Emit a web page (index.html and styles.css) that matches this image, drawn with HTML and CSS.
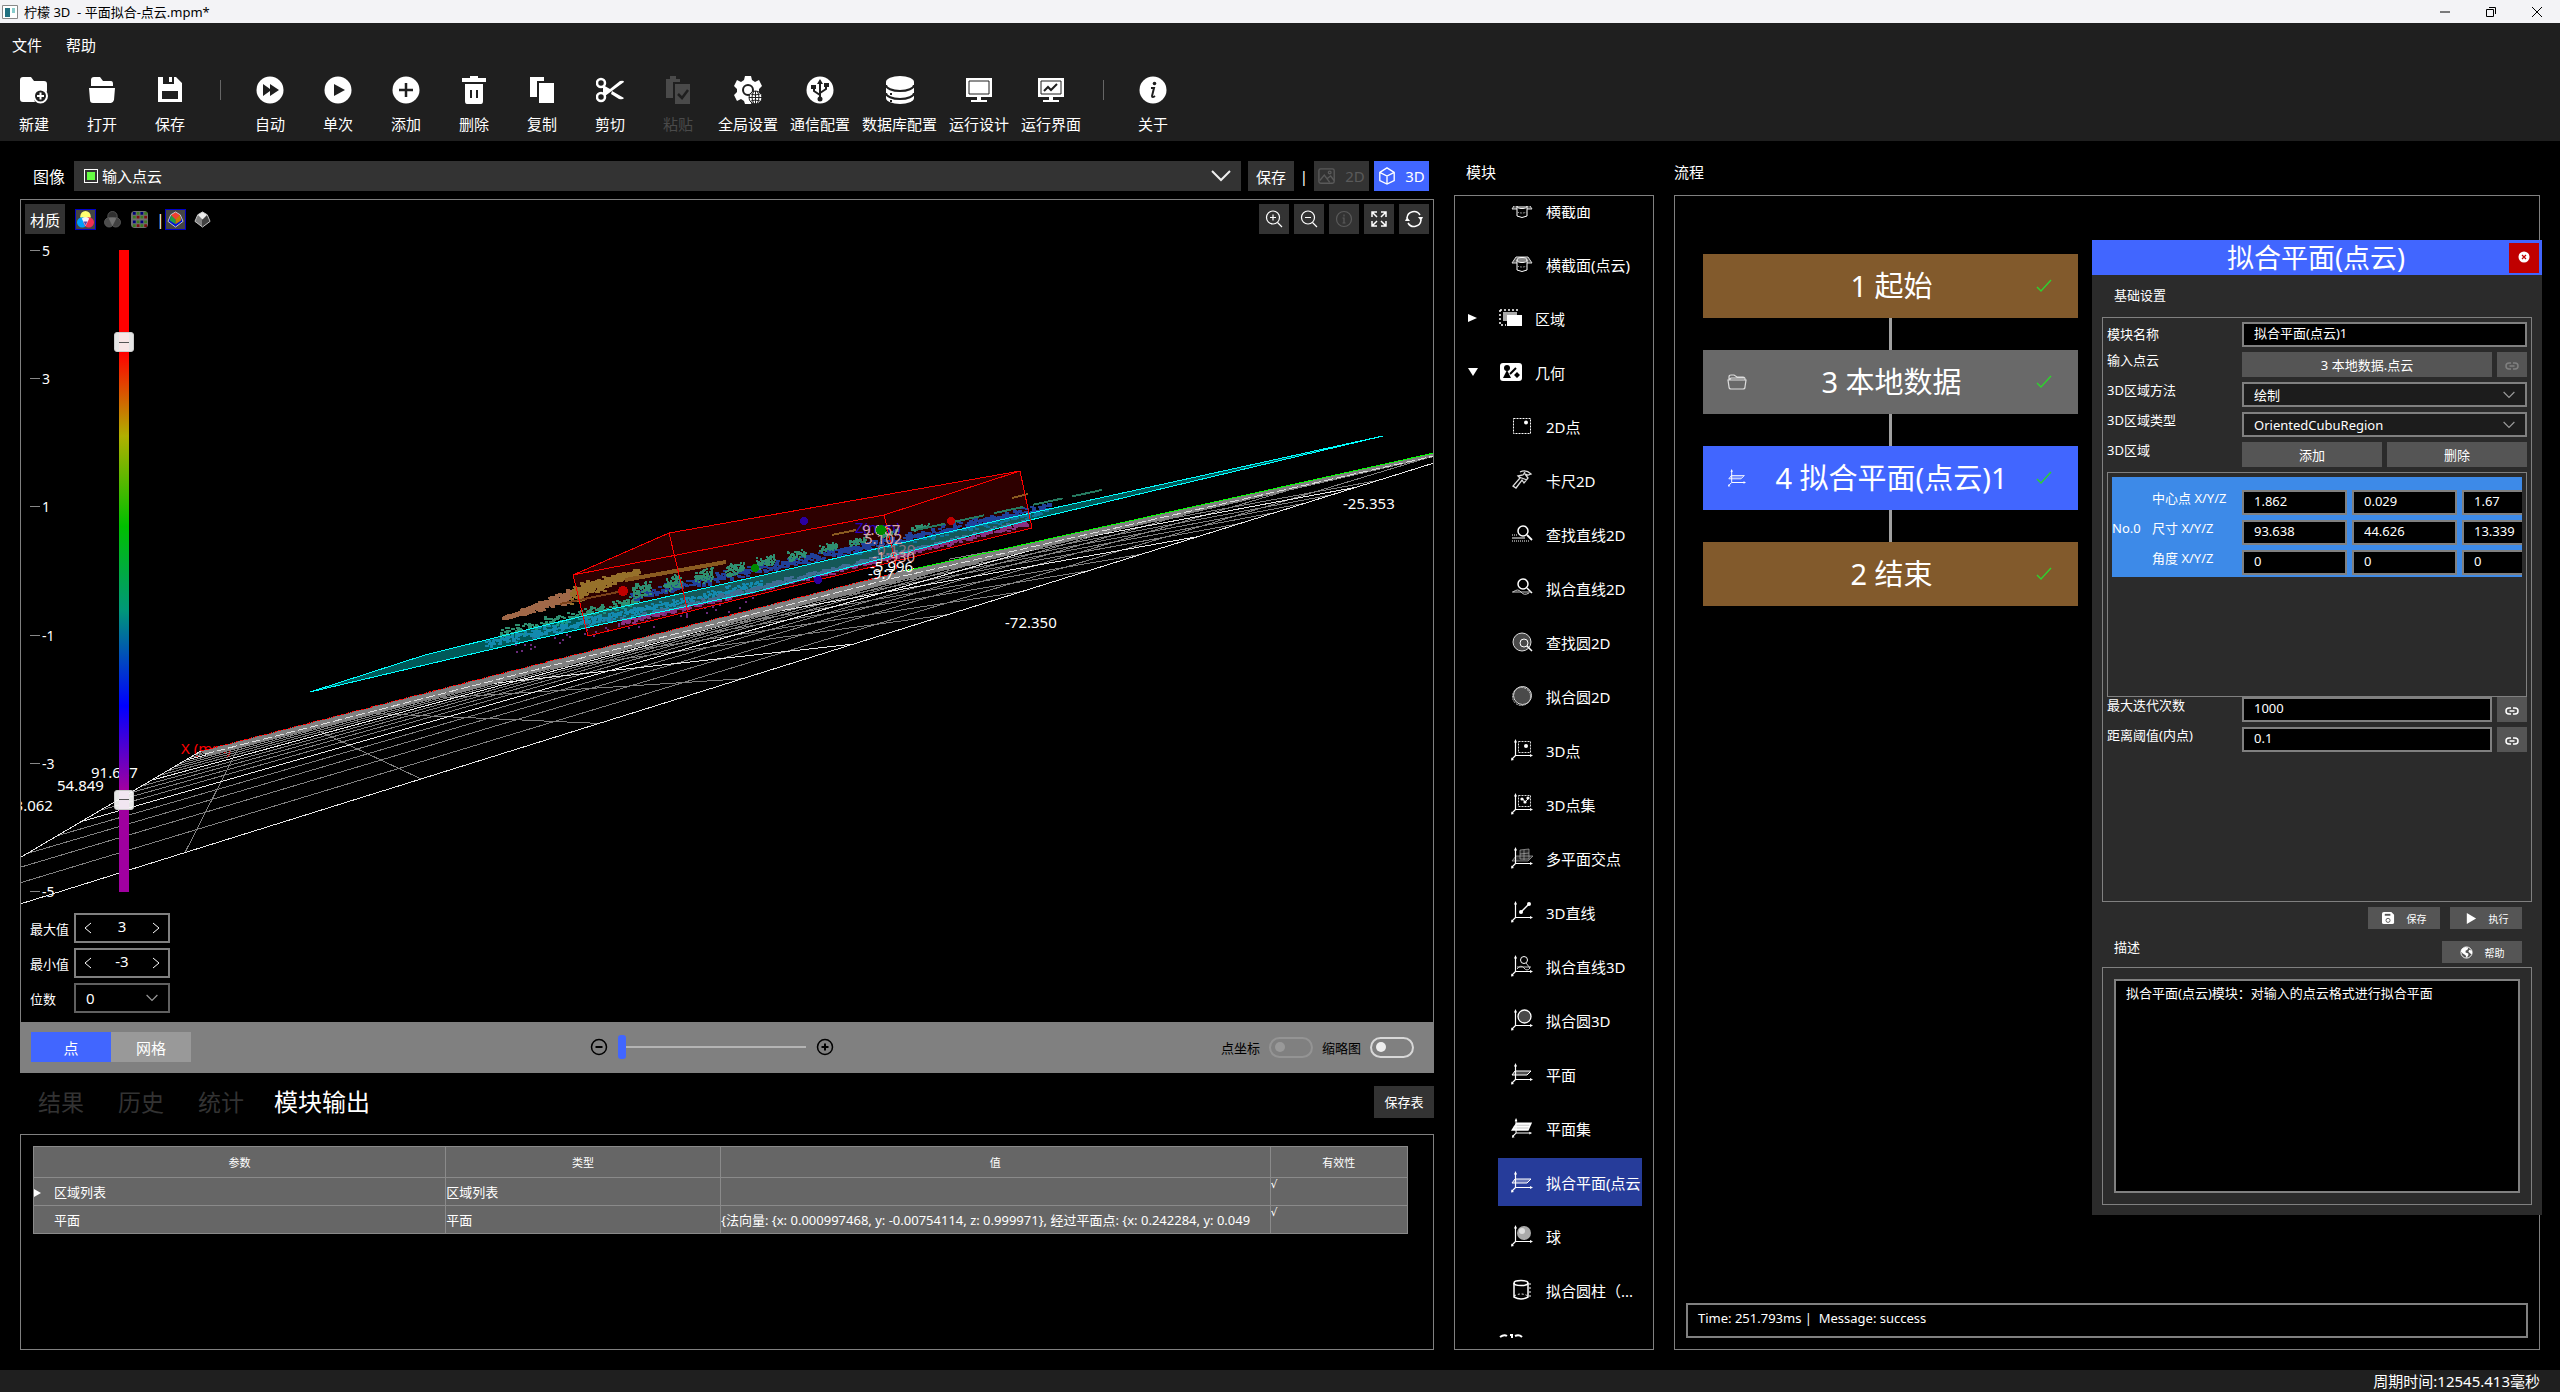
FILE: index.html
```html
<!DOCTYPE html>
<html lang="zh-CN">
<head>
    <meta charset="UTF-8">
    <meta name="viewport" content="width=device-width, initial-scale=1.0">
    <title>柠檬 3D - 平面拟合-点云.mpm*</title>
    <link rel="stylesheet" href="styles.css">
</head>
<body>
    <!-- 图标 -->
    <svg class="sprite" aria-hidden="true">
        <symbol id="i-new" viewBox="0 0 28 28"><path fill="#fff" d="M3 1h8l3 4h10q3 0 3 3v8a8 8 0 0 0-12 10H3q-3 0-3-3V4q0-3 3-3z"/><circle cx="20.500" cy="20" r="6.500" fill="#1f1f1f" stroke="#fff" stroke-width="2"/><path d="M20.500 16.500v7M17 20h7" stroke="#fff" stroke-width="2"/></symbol>
        <symbol id="i-open" viewBox="0 0 28 28"><path fill="#fff" d="M3 10V4q0-3 3-3h6l3 4h8q2 0 2 3v2zM1 12h26l-1 12q-1 3-3 3H5q-3 0-3-3z"/></symbol>
        <symbol id="i-save" viewBox="0 0 28 28"><path fill="#fff" fill-rule="evenodd" d="M2 1h18l6 6v19H2zM7 1v7h11V1h-2v5h-3V1zM6 15v8h16v-8z"/></symbol>
        <symbol id="i-auto" viewBox="0 0 28 28"><circle cx="14" cy="14" r="13.500" fill="#fff"/><path fill="#1f1f1f" d="M7 8l7 5V8l9 6-9 6v-5l-7 5z"/></symbol>
        <symbol id="i-once" viewBox="0 0 28 28"><circle cx="14" cy="14" r="13.500" fill="#fff"/><path fill="#1f1f1f" d="M10 8l11 6-11 6z"/></symbol>
        <symbol id="i-add" viewBox="0 0 28 28"><circle cx="14" cy="14" r="13.500" fill="#fff"/><path stroke="#1f1f1f" stroke-width="2.500" d="M14 7v14M7 14h14"/></symbol>
        <symbol id="i-del" viewBox="0 0 28 28"><path fill="#fff" fill-rule="evenodd" d="M10 0h8v2h8v4H2V2h8zM5 8h18v17q0 3-2 3H7q-2 0-2-3zM10 14v8h2v-8zm6 0v8h2v-8z"/></symbol>
        <symbol id="i-copy" viewBox="0 0 28 28"><path fill="#fff" d="M2 1h14v4H9v16H2zM11 7h15v20H11z"/></symbol>
        <symbol id="i-cut" viewBox="0 0 28 28"><g fill="none" stroke="#fff" stroke-width="2.500"><circle cx="5" cy="7" r="4"/><circle cx="5" cy="21" r="4"/></g><path fill="#fff" d="M7 9l7 4L24 5q4-1 4 1L9 20l-2-2zM16 15l12 7q-1 2-5 1l-8-5z"/></symbol>
        <symbol id="i-paste" viewBox="0 0 28 28"><path fill="#4a4a4a" d="M2 3h4V0h6v3h4v3H9v16H2zM11 8h15v20H11z"/><path d="M14 18l4 4 6-8" fill="none" stroke="#1f1f1f" stroke-width="2.500"/></symbol>
        <symbol id="i-gear" viewBox="0 0 28 28"><path fill="#fff" d="M11 0h6l1 4 3 2 4-2 3 6-3 3v3l3 3-3 6-4-2-3 2-1 3h-6l-1-3-3-2-4 2-3-6 3-3v-3L0 10l3-6 4 2 3-2z"/><circle cx="14" cy="14" r="5" fill="none" stroke="#1f1f1f" stroke-width="2"/><circle cx="21.500" cy="21.500" r="6.500" fill="#fff" stroke="#1f1f1f"/><path d="M15 21.500h13M21.500 15v13M17 18q4 2 9 0M17 25q4-2 9 0M20 15q-4 6 0 13M23 15q4 6 0 13" fill="none" stroke="#1f1f1f"/></symbol>
        <symbol id="i-usb" viewBox="0 0 28 28"><circle cx="14" cy="14" r="13.500" fill="#fff"/><path fill="none" stroke="#1f1f1f" stroke-width="2" d="M14 5v17M14 19l-6-4v-4M14 17l6-4V9"/><path fill="#1f1f1f" d="M14 3l3 5h-6zM5 9h5v4H5zM18 7h5v4h-5z"/><circle cx="14" cy="23" r="2.500" fill="#1f1f1f"/></symbol>
        <symbol id="i-db" viewBox="0 0 28 28"><path fill="#fff" d="M0 6a14 6 0 0 1 28 0v16a14 6 0 0 1-28 0z"/><path fill="none" stroke="#1f1f1f" stroke-width="2" d="M0 9a14 6 0 0 0 28 0M0 17a14 6 0 0 0 28 0"/><path fill="#1f1f1f" d="M4 17h2v2H4zM4 24h2v2H4z"/></symbol>
        <symbol id="i-screen" viewBox="0 0 28 28"><path fill="#fff" d="M1 2h26v19H1z"/><path fill="none" stroke="#1f1f1f" d="M4 5h20v13H4z"/><path fill="#fff" d="M12 21h4v3h6v2H6v-2h6z"/></symbol>
        <symbol id="i-chart" viewBox="0 0 28 28"><path fill="#fff" d="M1 2h26v19H1zM12 21h4v3h6v2H6v-2h6z"/><path fill="none" stroke="#1f1f1f" d="M4 5h20v13H4z"/><path fill="none" stroke="#1f1f1f" stroke-width="2" d="M7 15l4-4 3 3 6-6"/></symbol>
        <symbol id="i-about" viewBox="0 0 28 28"><circle cx="14" cy="14" r="13.500" fill="#fff"/><circle cx="15.500" cy="7.500" r="1.800" fill="#1f1f1f"/><path d="M12 12h3l-2 8q0 2 3 0" fill="none" stroke="#1f1f1f" stroke-width="2"/></symbol>
        <symbol id="i-down" viewBox="0 0 20 12"><path d="M1 1l9 9 9-9" fill="none" stroke="currentColor" stroke-width="2"/></symbol>
        <symbol id="i-img" viewBox="0 0 20 18"><g fill="none" stroke="currentColor" stroke-width="1.500"><rect x="1" y="1" width="17" height="16" rx="2"/><path d="M2 14l5-6 6 8M10 12l4-3 4 5"/><circle cx="13" cy="5" r="1.500"/></g></symbol>
        <symbol id="i-cube" viewBox="0 0 20 20"><path d="M10 1l8 5v9l-8 4-8-4V6zM2 6l8 4 8-4M10 10v9" fill="none" stroke="currentColor" stroke-width="1.500"/></symbol>
        <symbol id="i-rgb" viewBox="0 0 18 18"><circle cx="9" cy="5.500" r="5.500" fill="#ffff70"/><circle cx="5.500" cy="12" r="5.500" fill="#00a0ff"/><circle cx="12.500" cy="12" r="5.500" fill="#f03050"/><path d="M5 8q4-3 8 0l-4 8z" fill="#f0f0ff"/><path d="M7 11h4l-2 4z" fill="#5040b0"/></symbol>
        <symbol id="i-mono" viewBox="0 0 18 18"><g stroke="#606060" stroke-width=".8"><circle cx="9" cy="5.500" r="5" fill="#303030"/><circle cx="5.500" cy="12" r="5" fill="#4c4c4c"/><circle cx="12.500" cy="12" r="5" fill="#404040"/></g><path d="M5 8q4-3 8 0l-4 8z" fill="#707070"/></symbol>
        <symbol id="i-tex" viewBox="0 0 18 18"><rect width="18" height="18" rx="4" fill="#707070"/><path fill="#00007a" d="M2 1h3v3H2zM10 1h3v3h-3zM2 10h3v3H2zM10 10h3v3h-3z"/><path fill="#7a1010" d="M6 5h3v3H6zM14 5h3v3h-3zM6 14h3v3H6zM14 14h3v3h-3z"/><path fill="#3c7a20" d="M6 1h3v3H6zM14 1h3v3h-3zM2 5h3v3H2zM10 5h3v3h-3zM6 10h3v3H6zM14 10h3v3h-3zM2 14h3v3H2zM10 14h3v3h-3z"/></symbol>
        <symbol id="i-gem" viewBox="0 0 18 18"><path fill="#0010d8" d="M4 4l5-3 5 3 3 7-8 6-8-6z"/><path fill="#20a040" d="M4 4l5 2v8l-6-4z"/><path fill="#c08000" d="M14 4L9 6v8l6-4z"/><path fill="#f04030" d="M4 4l5-3 5 3-5 5z"/><path fill="none" stroke="#ccc" d="M4 4l5-3 5 3 3 7-8 6-8-6z"/></symbol>
        <symbol id="i-gem2" viewBox="0 0 18 18"><path fill="#808080" d="M4 4l5-3v16l-8-6z"/><path fill="#404040" d="M14 4L9 1v16l8-6z"/><path fill="#eee" d="M4 4l5-3 5 3-5 5z"/><path fill="none" stroke="#ccc" d="M4 4l5-3 5 3 3 7-8 6-8-6z"/></symbol>
        <symbol id="i-zin" viewBox="0 0 18 18"><g fill="none" stroke="currentColor" stroke-width="1.200"><circle cx="8" cy="7.500" r="6.500"/><path d="M12.500 12.500L17 17M5 7.500h6M8 4.500v6"/></g></symbol>
        <symbol id="i-zout" viewBox="0 0 18 18"><g fill="none" stroke="currentColor" stroke-width="1.200"><circle cx="8" cy="7.500" r="6.500"/><path d="M12.500 12.500L17 17M5 7.500h6"/></g></symbol>
        <symbol id="i-inf" viewBox="0 0 18 18"><g fill="none" stroke="currentColor" stroke-width="1.200"><circle cx="9" cy="9" r="7.500"/><path d="M7.500 8H9v5M7.500 13h3M9 4.500v2"/></g></symbol>
        <symbol id="i-full" viewBox="0 0 18 18"><path d="M2 7V2h5M11 2h5v5M16 11v5h-5M7 16H2v-5M2 2l5 5M16 2l-5 5M16 16l-5-5M2 16l5-5" fill="none" stroke="currentColor" stroke-width="1.500"/></symbol>
        <symbol id="i-sync" viewBox="0 0 18 18"><path d="M2 8a7 7 0 0 1 13-3M16 10a7 7 0 0 1-13 3" fill="none" stroke="currentColor" stroke-width="1.500"/><path fill="currentColor" d="M13 7h5l-2 4zM0 11h5L2 7z"/></symbol>
        <symbol id="i-minus" viewBox="0 0 18 18"><circle cx="9" cy="9" r="7.500" fill="none" stroke="#000" stroke-width="1.500"/><path d="M5.500 9h7" stroke="#000" stroke-width="2"/></symbol>
        <symbol id="i-plus" viewBox="0 0 18 18"><circle cx="9" cy="9" r="7.500" fill="none" stroke="#000" stroke-width="1.500"/><path d="M5.500 9h7M9 5.500v7" stroke="#000" stroke-width="2"/></symbol>
        <symbol id="i-tick" viewBox="0 0 16 14"><path d="M1 8l4 4L15 1" fill="none" stroke="#2fd02f" stroke-width="1.500"/></symbol>
        <symbol id="i-link" viewBox="0 0 14 8"><path d="M6 1H4a3 3 0 0 0 0 6h2M8 1h2a3 3 0 0 1 0 6H8M4.500 4h5" fill="none" stroke="currentColor" stroke-width="1.500"/></symbol>
        <symbol id="i-folder" viewBox="0 0 20 16"><path d="M2 6V3q0-2 2-2h3l3 2h6q2 0 2 2v1M1 6h18l-1 7q0 2-2 2H4q-2 0-2-2zM2 6l2-2h13" fill="none" stroke="#ddd" stroke-width="1.200"/></symbol>

        <symbol id="axes" viewBox="0 0 22 22"><path d="M4.500 2v14.500H20M4.500 16.500L1 20" fill="none" stroke="#fff" stroke-width="1.200"/><path fill="#fff" d="M4.500 0l1.500 3.500H3zM22 16.500L19 18v-3zM0 21.500l.5-3L3 21z"/></symbol>
        <symbol id="m-cross" viewBox="0 0 22 22"><path d="M5 4h12l4 6H1z" fill="#555" stroke="#ddd"/><path d="M6 7v10q5 3 10 0V7" fill="#000" stroke="#fff"/><ellipse cx="11" cy="7" rx="5" ry="2.500" fill="#888" stroke="#fff"/><path d="M6 13q5 2 10 0" fill="none" stroke="#999" stroke-dasharray="2 1"/></symbol>
        <symbol id="m-area" viewBox="0 0 24 20"><path d="M1 2h20M1 2v15h6" fill="none" stroke="#fff" stroke-width="1.500" stroke-dasharray="2 2"/><path fill="#aaa" d="M4 4h14v9H4z"/><path fill="#fff" d="M8 7h15v11H8z"/></symbol>
        <symbol id="m-geo" viewBox="0 0 24 20"><rect x="1" y="1" width="22" height="18" rx="3" fill="#fff"/><circle cx="8" cy="6" r="3" fill="#000"/><path d="M8 8l-4 8h8zM18 10l3 3-3 3-3-3z"/><path d="M11 12l6-6" stroke="#000" stroke-width="2"/></symbol>
        <symbol id="m-pt" viewBox="0 0 22 22"><path d="M2.500 3.500h17v15h-17z" fill="none" stroke="#fff" stroke-dasharray="2 1"/><circle cx="15" cy="7.500" r="2" fill="#fff"/></symbol>
        <symbol id="m-cal" viewBox="0 0 22 22"><path d="M9 3q6-3 11 2l-3 1-3-1 3 4-4 5-2-3-6 8-3-2 7-8-2-2 5-1 2-3M8 8l8 3" fill="none" stroke="#ddd" stroke-width="1.300"/></symbol>
        <symbol id="m-fline" viewBox="0 0 22 22"><circle cx="12" cy="8" r="5" fill="none" stroke="#fff" stroke-width="1.500"/><path d="M16 12l5 5" stroke="#fff" stroke-width="1.800"/><path d="M1 15h13" stroke="#fff"/><path d="M1 12h6M1 18h17" stroke="#fff" stroke-dasharray="1 1"/></symbol>
        <symbol id="m-line" viewBox="0 0 22 22"><circle cx="12" cy="7" r="5" fill="none" stroke="#fff" stroke-width="1.500"/><path d="M16 11l5 5" stroke="#fff" stroke-width="1.500"/><path d="M1 15h19M2 15q5-4 8 0t8 1" fill="none" stroke="#ccc"/></symbol>
        <symbol id="m-fcir" viewBox="0 0 22 22"><circle cx="11" cy="11" r="9" fill="#4a4a4a" stroke="#ddd"/><circle cx="13" cy="12" r="4" fill="none" stroke="#fff"/><path d="M16 15l5 5" stroke="#fff" stroke-width="1.500"/></symbol>
        <symbol id="m-cir" viewBox="0 0 22 22"><circle cx="11.500" cy="10.500" r="9" fill="#4a4a4a" stroke="#ddd"/><circle cx="10.500" cy="11.500" r="9" fill="none" stroke="#ccc" stroke-dasharray="2 1"/></symbol>
        <symbol id="m-3pt" viewBox="0 0 22 22"><use href="#axes"/><path d="M7.500 2.500h12v11h-12z" fill="none" stroke="#ddd" stroke-dasharray="2 1"/><circle cx="15" cy="7" r="2" fill="#fff"/></symbol>
        <symbol id="m-3pts" viewBox="0 0 22 22"><use href="#axes"/><path d="M7.500 2.500h12v11h-12z" fill="none" stroke="#ddd" stroke-dasharray="2 1"/><path d="M11 5l3 4 3-3" fill="none" stroke="#fff"/><circle cx="11" cy="6" r="1.600" fill="#fff"/><circle cx="14" cy="9" r="1.600" fill="#fff"/><circle cx="17" cy="5" r="1.600" fill="#fff"/></symbol>
        <symbol id="m-multi" viewBox="0 0 22 22"><path d="M5 9h17l-5 5H1zM9 3l9-1v10H9zM13 3v10M9 7l9-1" fill="#444" fill-opacity=".6" stroke="#aaa" stroke-width=".7"/><use href="#axes"/></symbol>
        <symbol id="m-3line" viewBox="0 0 22 22"><use href="#axes"/><path d="M10 11l8-8" stroke="#fff" stroke-width="1.500"/><circle cx="10" cy="11" r="2" fill="#fff"/><circle cx="18" cy="3" r="2" fill="#fff"/></symbol>
        <symbol id="m-f3line" viewBox="0 0 22 22"><use href="#axes"/><circle cx="13" cy="5" r="3.500" fill="none" stroke="#fff"/><path d="M15 8l4 5M6 12h14M6 14q4-5 7-1t6 0" fill="none" stroke="#ccc"/></symbol>
        <symbol id="m-f3cir" viewBox="0 0 22 22"><use href="#axes"/><circle cx="13.500" cy="7.500" r="6.500" fill="#4a4a4a" stroke="#fff" stroke-width="1.300"/></symbol>
        <symbol id="m-plane" viewBox="0 0 22 22"><path d="M4 8h16l-4 4H1z" fill="#fff" fill-opacity=".3" stroke="#fff"/><use href="#axes"/></symbol>
        <symbol id="m-planes" viewBox="0 0 24 22"><path d="M6 5h17l-4 9H0l3-5z" fill="#fff"/><path d="M5 8h15M4 11h15" stroke="#999" stroke-width=".6"/><use href="#axes"/></symbol>
        <symbol id="m-ball" viewBox="0 0 22 22"><use href="#axes"/><circle cx="13" cy="8" r="7" fill="#aaa"/><circle cx="11" cy="6" r="3" fill="#ddd"/></symbol>
        <symbol id="m-cyl" viewBox="0 0 22 22"><path d="M3 4v14q7 4 14 0V4" fill="none" stroke="#fff" stroke-width="1.500"/><ellipse cx="10" cy="4" rx="7" ry="2.500" fill="none" stroke="#fff" stroke-width="1.500"/><path d="M3 17q7-4 14 0M19 4v14" fill="none" stroke="#fff" stroke-dasharray="2 2"/></symbol>
        <symbol id="m-next" viewBox="0 0 24 20"><path d="M1 3q4-3 7-1M11 1h2v17M16 2q4-2 7 1" fill="none" stroke="#fff" stroke-width="2"/></symbol>
    </svg>

    <div class="app">
        <div class="titlebar">
            <svg class="app-icon" viewBox="0 0 16 16"><path fill="#fff" stroke="#888" d="M.5 1.500h15v13H.5z"/><path fill="#207080" d="M3 4h5v9H3z"/><path fill="#8cc" d="M10 4h3v5h-3z"/></svg>
            <span class="app-name">柠檬 3D &nbsp;- 平面拟合-点云.mpm*</span>
            <div class="win-buttons">
                <button type="button" aria-label="最小化"><svg viewBox="0 0 12 12"><path d="M1 6h10" stroke="#000"/></svg></button>
                <button type="button" aria-label="还原"><svg viewBox="0 0 12 12"><path d="M1.500 3.500h7v7h-7zM4 1.500h6.500V8" fill="none" stroke="#000"/></svg></button>
                <button type="button" aria-label="关闭"><svg viewBox="0 0 12 12"><path d="M1 1l10 10M11 1L1 11" stroke="#000"/></svg></button>
            </div>
        </div>

        <header class="header">
            <nav class="menu">
                <a href="#">文件</a>
                <a href="#">帮助</a>
            </nav>
            <div class="toolbar">
                <button type="button"><svg><use href="#i-new"/></svg>新建</button>
                <button type="button"><svg><use href="#i-open"/></svg>打开</button>
                <button type="button"><svg><use href="#i-save"/></svg>保存</button>
                <span class="sep"></span>
                <button type="button"><svg><use href="#i-auto"/></svg>自动</button>
                <button type="button"><svg><use href="#i-once"/></svg>单次</button>
                <button type="button"><svg><use href="#i-add"/></svg>添加</button>
                <button type="button"><svg><use href="#i-del"/></svg>删除</button>
                <button type="button"><svg><use href="#i-copy"/></svg>复制</button>
                <button type="button"><svg><use href="#i-cut"/></svg>剪切</button>
                <button type="button" disabled><svg><use href="#i-paste"/></svg>粘贴</button>
                <button type="button"><svg><use href="#i-gear"/></svg>全局设置</button>
                <button type="button"><svg><use href="#i-usb"/></svg>通信配置</button>
                <button type="button"><svg><use href="#i-db"/></svg>数据库配置</button>
                <button type="button"><svg><use href="#i-screen"/></svg>运行设计</button>
                <button type="button"><svg><use href="#i-chart"/></svg>运行界面</button>
                <span class="sep"></span>
                <button type="button"><svg><use href="#i-about"/></svg>关于</button>
            </div>
        </header>

        <main class="main">
            <section class="left">
                <div class="source">
                    <label for="image">图像</label>
                    <div class="select source-select">
                        <i class="swatch"></i>
                        <select id="image"><option>输入点云</option></select>
                        <svg><use href="#i-down"/></svg>
                    </div>
                    <button type="button" class="btn">保存</button>
                    <span class="bar">|</span>
                    <button type="button" class="btn mode" disabled><svg><use href="#i-img"/></svg>2D</button>
                    <button type="button" class="btn mode on"><svg><use href="#i-cube"/></svg>3D</button>
                </div>

                <div class="view">
                    <div class="viewport">
                        <svg class="scene" viewBox="21 200 1412 822" preserveAspectRatio="xMidYMid slice" shape-rendering="crispEdges">
                            <text class="red" x="181" y="754">X (mm)</text>
                            <g id="floor"></g>
                            <path fill="#808080" d="M201 751L480 679 895 573 1434 453V457L890 583 480 687 208 756z"/>
                            <path d="M205 754L480 684 890 579 1434 456" stroke="#e0e0e0" stroke-dasharray="9 3" fill="none"/>
                            <path d="M201 751L480 679 895 573" stroke="#f00" stroke-dasharray="3 2" fill="none"/>
                            <path d="M905 571L1434 453" stroke="#0f0" fill="none"/>
                            <path fill="#2d0000" d="M573 575L669 533 1020 471 1032 528 588 636z"/>
                            <g id="cloud"></g>
                            <path fill="#00a0a0" fill-opacity=".55" stroke="#0ff" d="M310 692L425 655 603 611 755 577 1022 515 1383 436 1022 522 755 592 603 624 480 652z"/>
                            <path fill="none" stroke="#f00" d="M573 575L669 533 1020 471 884 515zM573 575l15 61 444-108-12-57M669 533l19 79M884 515l13 54"/>
                            <g fill="#2a00a0"><circle cx="804" cy="521" r="4"/><circle cx="818" cy="580" r="4"/></g>
                            <g fill="#c00000"><circle cx="623" cy="591" r="5"/><circle cx="951" cy="521" r="4"/></g>
                            <text class="blue" x="855" y="533">Z(mm)</text>
                            <text class="pink" x="862" y="535">9.067</text>
                            <text class="pink" x="864" y="544">5.102</text>
                            <text class="dim" x="877" y="555">0.120</text>
                            <text class="pink" x="872" y="562">-1.930</text>
                            <text x="870" y="572">-5.996</text>
                            <text x="868" y="579">-9.7</text>
                            <g fill="#008a00"><circle cx="881" cy="530" r="5"/><circle cx="755" cy="568" r="4"/></g>
                            <text x="91" y="778">91.687</text>
                            <text x="57" y="791">54.849</text>
                            <text x="6" y="811">73.062</text>
                            <text x="1005" y="628">-72.350</text>
                            <text x="1343" y="509">-25.353</text>
                        </svg>

                        <div class="view-tools">
                            <button type="button" class="btn material">材质</button>
                            <button type="button" class="tex on" aria-label="彩色"><svg><use href="#i-rgb"/></svg></button>
                            <button type="button" class="tex" aria-label="灰度"><svg><use href="#i-mono"/></svg></button>
                            <button type="button" class="tex" aria-label="纹理"><svg><use href="#i-tex"/></svg></button>
                            <span class="bar">|</span>
                            <button type="button" class="tex on" aria-label="高度色"><svg><use href="#i-gem"/></svg></button>
                            <button type="button" class="tex" aria-label="高度灰"><svg><use href="#i-gem2"/></svg></button>
                            <div class="zoom-tools">
                                <button type="button" class="btn sq" aria-label="放大"><svg><use href="#i-zin"/></svg></button>
                                <button type="button" class="btn sq" aria-label="缩小"><svg><use href="#i-zout"/></svg></button>
                                <button type="button" class="btn sq" aria-label="信息" disabled><svg><use href="#i-inf"/></svg></button>
                                <button type="button" class="btn sq" aria-label="适应"><svg><use href="#i-full"/></svg></button>
                                <button type="button" class="btn sq" aria-label="刷新"><svg><use href="#i-sync"/></svg></button>
                            </div>
                        </div>

                        <div class="scale">
                            <ul class="ticks">
                                <li>5</li><li>3</li><li>1</li><li>-1</li><li>-3</li><li>-5</li>
                            </ul>
                            <div class="ramp">
                                <input type="range" aria-label="上限" min="-5" max="5" step="0.01" value="3.68">
                                <input type="range" aria-label="下限" min="-5" max="5" step="0.01" value="-3.68">
                            </div>
                        </div>

                        <div class="limits">
                            <label for="vmax">最大值</label>
                            <div class="spin">
                                <button type="button" aria-label="减"><svg viewBox="0 0 8 12"><path d="M7 1L1 6l6 5" fill="none" stroke="#fff"/></svg></button>
                                <input id="vmax" type="text" value="3">
                                <button type="button" aria-label="加"><svg viewBox="0 0 8 12"><path d="M1 1l6 5-6 5" fill="none" stroke="#fff"/></svg></button>
                            </div>
                            <label for="vmin">最小值</label>
                            <div class="spin">
                                <button type="button" aria-label="减"><svg viewBox="0 0 8 12"><path d="M7 1L1 6l6 5" fill="none" stroke="#fff"/></svg></button>
                                <input id="vmin" type="text" value="-3">
                                <button type="button" aria-label="加"><svg viewBox="0 0 8 12"><path d="M1 1l6 5-6 5" fill="none" stroke="#fff"/></svg></button>
                            </div>
                            <label for="digits">位数</label>
                            <div class="select digits">
                                <select id="digits"><option>0</option></select>
                                <svg><use href="#i-down"/></svg>
                            </div>
                        </div>
                    </div>

                    <div class="view-bar">
                        <div class="segment">
                            <button type="button" class="on">点</button><button type="button">网格</button>
                        </div>
                        <div class="size">
                            <svg><use href="#i-minus"/></svg>
                            <input type="range" aria-label="点大小" min="1" max="10" value="1">
                            <svg><use href="#i-plus"/></svg>
                        </div>
                        <div class="toggles">
                            <label for="coord">点坐标</label>
                            <input id="coord" type="checkbox" disabled>
                            <label for="thumb">缩略图</label>
                            <input id="thumb" type="checkbox">
                        </div>
                    </div>
                </div>

                <div class="tabs">
                    <button type="button">结果</button>
                    <button type="button">历史</button>
                    <button type="button">统计</button>
                    <button type="button" class="on">模块输出</button>
                    <button type="button" class="btn save-table">保存表</button>
                </div>

                <div class="output">
                    <table>
                        <thead>
                            <tr><th class="c-name">参数</th><th class="c-type">类型</th><th class="c-value">值</th><th class="c-ok">有效性</th></tr>
                        </thead>
                        <tbody>
                            <tr><td class="name open">区域列表</td><td>区域列表</td><td></td><td class="ok">√</td></tr>
                            <tr><td class="name">平面</td><td>平面</td><td>{法向量: {x: 0.000997468, y: -0.00754114, z: 0.999971}, 经过平面点: {x: 0.242284, y: 0.049</td><td class="ok">√</td></tr>
                        </tbody>
                    </table>
                </div>
            </section>

            <section class="column">
                <h2>模块</h2>
                <div class="modules">
                    <ul class="tree">
                        <li><svg><use href="#m-cross"/></svg>横截面</li>
                        <li><svg><use href="#m-cross"/></svg>横截面(点云)</li>
                        <li class="group"><i class="closed"></i><svg><use href="#m-area"/></svg>区域</li>
                        <li class="group"><i class="opened"></i><svg><use href="#m-geo"/></svg>几何</li>
                        <li><svg><use href="#m-pt"/></svg>2D点</li>
                        <li><svg><use href="#m-cal"/></svg>卡尺2D</li>
                        <li><svg><use href="#m-fline"/></svg>查找直线2D</li>
                        <li><svg><use href="#m-line"/></svg>拟合直线2D</li>
                        <li><svg><use href="#m-fcir"/></svg>查找圆2D</li>
                        <li><svg><use href="#m-cir"/></svg>拟合圆2D</li>
                        <li><svg><use href="#m-3pt"/></svg>3D点</li>
                        <li><svg><use href="#m-3pts"/></svg>3D点集</li>
                        <li><svg><use href="#m-multi"/></svg>多平面交点</li>
                        <li><svg><use href="#m-3line"/></svg>3D直线</li>
                        <li><svg><use href="#m-f3line"/></svg>拟合直线3D</li>
                        <li><svg><use href="#m-f3cir"/></svg>拟合圆3D</li>
                        <li><svg><use href="#m-plane"/></svg>平面</li>
                        <li><svg><use href="#m-planes"/></svg>平面集</li>
                        <li class="on"><svg><use href="#m-plane"/></svg>拟合平面(点云</li>
                        <li><svg><use href="#m-ball"/></svg>球</li>
                        <li><svg><use href="#m-cyl"/></svg>拟合圆柱（...</li>
                        <li class="group"><i></i><svg><use href="#m-next"/></svg></li>
                    </ul>
                </div>
            </section>

            <section class="column">
                <h2>流程</h2>
                <div class="flow">
                    <ol class="nodes">
                        <li class="edge"><span></span>1 起始<svg class="tick"><use href="#i-tick"/></svg></li>
                        <li class="data"><svg class="kind"><use href="#i-folder"/></svg>3 本地数据<svg class="tick"><use href="#i-tick"/></svg></li>
                        <li class="active"><svg class="kind"><use href="#m-plane"/></svg>4 拟合平面(点云)1<svg class="tick"><use href="#i-tick"/></svg></li>
                        <li class="edge"><span></span>2 结束<svg class="tick"><use href="#i-tick"/></svg></li>
                    </ol>
                    <output class="log">Time: 251.793ms | &nbsp;Message: success</output>

                    <!-- 模块设置窗口 -->
                    <div class="dialog" role="dialog" aria-labelledby="dlg-title">
                        <div class="dlg-head">
                            <h3 id="dlg-title">拟合平面(点云)</h3>
                            <button type="button" class="close" aria-label="关闭"><svg viewBox="0 0 12 12"><circle cx="6" cy="6" r="5.500" fill="#fff"/><path d="M4 4l4 4M8 4L4 8" stroke="#c00000" stroke-width="1.200"/></svg></button>
                        </div>
                        <h4>基础设置</h4>
                        <form class="settings">
                            <div class="row middle">
                                <label for="name">模块名称</label>
                                <input id="name" type="text" value="拟合平面(点云)1">
                            </div>
                            <div class="row">
                                <label for="cloud-in">输入点云</label>
                                <button type="button" id="cloud-in">3 本地数据.点云</button>
                                <button type="button" class="link" aria-label="链接" disabled><svg><use href="#i-link"/></svg></button>
                            </div>
                            <div class="row">
                                <label for="method">3D区域方法</label>
                                <div class="select">
                                    <select id="method"><option>绘制</option></select>
                                    <svg><use href="#i-down"/></svg>
                                </div>
                            </div>
                            <div class="row">
                                <label for="type">3D区域类型</label>
                                <div class="select">
                                    <select id="type"><option>OrientedCubuRegion</option></select>
                                    <svg><use href="#i-down"/></svg>
                                </div>
                            </div>
                            <div class="row">
                                <label for="region-add">3D区域</label>
                                <button type="button" id="region-add">添加</button>
                                <button type="button">删除</button>
                            </div>
                            <div class="regions">
                                <div class="region">
                                    <span class="no">No.0</span>
                                    <span>中心点 X/Y/Z</span>
                                    <input type="text" aria-label="中心点 X" value="1.862"><input type="text" aria-label="中心点 Y" value="0.029"><input type="text" aria-label="中心点 Z" value="1.67">
                                    <span>尺寸 X/Y/Z</span>
                                    <input type="text" aria-label="尺寸 X" value="93.638"><input type="text" aria-label="尺寸 Y" value="44.626"><input type="text" aria-label="尺寸 Z" value="13.339">
                                    <span>角度 X/Y/Z</span>
                                    <input type="text" aria-label="角度 X" value="0"><input type="text" aria-label="角度 Y" value="0"><input type="text" aria-label="角度 Z" value="0">
                                </div>
                            </div>
                            <div class="row">
                                <label for="iter">最大迭代次数</label>
                                <input id="iter" type="text" value="1000">
                                <button type="button" class="link" aria-label="链接"><svg><use href="#i-link"/></svg></button>
                            </div>
                            <div class="row">
                                <label for="dist">距离阈值(内点)</label>
                                <input id="dist" type="text" value="0.1">
                                <button type="button" class="link" aria-label="链接"><svg><use href="#i-link"/></svg></button>
                            </div>
                        </form>
                        <div class="actions">
                            <button type="button"><svg viewBox="0 0 14 14"><path fill="#fff" d="M2 0h8l3 3v8q0 2-2 2H2q-2 0-2-2V2q0-2 2-2z"/><path fill="#555" d="M3 2h6v2H3z"/><circle cx="6.500" cy="9" r="2.200" fill="none" stroke="#555"/></svg>保存</button>
                            <button type="button"><svg viewBox="0 0 14 14"><path fill="#fff" d="M3 1l10 6-10 6z"/></svg>执行</button>
                        </div>
                        <div class="desc-head">
                            <h4><label for="desc">描述</label></h4>
                            <button type="button"><svg viewBox="0 0 14 14"><circle cx="7" cy="7" r="6" fill="none" stroke="#fff"/><path fill="#fff" d="M2 3l4-2 3 1-1 2-2 1v2l3 1v2l-2 3-1-3-3-2-2-2zM10 4l3 1v4l-2-1-2-2z"/></svg>帮助</button>
                        </div>
                        <div class="desc">
                            <textarea id="desc" readonly>拟合平面(点云)模块：对输入的点云格式进行拟合平面</textarea>
                        </div>
                    </div>
                </div>
            </section>
        </main>

        <footer class="status">周期时间:12545.413毫秒</footer>
    </div>
    <script src="scene.js"></script>
</body>
</html>
```
FILE: styles.css
```css
* {
    box-sizing: border-box;
}

body, html {
    margin: 0;
    padding: 0;
    background: #000;
    color: #fff;
    font-family: "Noto Sans", "Noto Sans CJK SC", sans-serif;
    font-size: 15px;
}

button, input, select, textarea {
    margin: 0;
    padding: 0;
    border: none;
    border-radius: 0;
    background: none;
    color: inherit;
    font: inherit;
    outline: none;
}

h2, h3, h4, ul, ol {
    margin: 0;
    padding: 0;
    font-weight: 400;
    list-style: none;
}

.sprite {
    display: none;
}

.app {
    display: flex;
    flex-direction: column;
    height: 100vh;
}

/* 标题栏 */
.titlebar {
    display: flex;
    align-items: center;
    height: 23px;
    padding-left: 2px;
    background: #f3f3f6;
    color: #000;
    font-size: 13px;
}

.app-icon {
    width: 16px;
    height: 16px;
    margin-right: 6px;
}

.win-buttons {
    display: flex;
    margin-left: auto;
}

.win-buttons button {
    display: flex;
    align-items: center;
    justify-content: center;
    width: 46px;
}

.win-buttons svg {
    width: 12px;
    height: 12px;
}

/* 菜单和工具栏 */
.header {
    background: #1f1f1f;
}

.menu {
    display: flex;
    align-items: center;
    gap: 24px;
    height: 43px;
    padding-left: 12px;
}

.menu a {
    color: #fff;
    text-decoration: none;
}

.toolbar {
    display: flex;
    padding: 10px 0 7px;
}

.toolbar button {
    display: flex;
    flex-direction: column;
    align-items: center;
    gap: 10px;
    min-width: 68px;
    padding: 0 6px;
    line-height: 20px;
}

.toolbar button:disabled {
    color: #4a4a4a;
}

.toolbar svg {
    width: 28px;
    height: 28px;
}

.sep {
    width: 1px;
    height: 20px;
    margin: 4px 15px 4px 16px;
    background: #666;
}

.main {
    flex: 1;
    display: grid;
    grid-template-columns: 1414fr 200px 866fr;
    grid-template-rows: minmax(0, 1fr);
    column-gap: 20px;
    min-height: 0;
    padding: 20px;
}

.left {
    display: flex;
    flex-direction: column;
    min-width: 0;
}

/* 通用控件 */
.btn {
    display: flex;
    align-items: center;
    justify-content: center;
    height: 30px;
    background: #333;
}

.btn:disabled {
    color: #5a5a5a;
}

.btn svg {
    width: 18px;
    height: 18px;
}

.select {
    display: grid;
    align-items: center;
}

.select > * {
    grid-area: 1 / 1;
}

.select select {
    width: 100%;
    height: 100%;
    appearance: none;
}

.select svg {
    justify-self: end;
    width: 12px;
    height: 8px;
    margin-right: 10px;
    color: #999;
    pointer-events: none;
}

/* 图像选择 */
.source {
    display: flex;
    align-items: center;
    height: 30px;
    margin-bottom: 8px;
    padding: 0 5px 0 13px;
}

.source > label {
    width: 41px;
    font-size: 16px;
}

.source-select {
    flex: 1;
    height: 30px;
    margin-right: 7px;
    background: #333;
}

.source-select select {
    padding-left: 28px;
}

.source-select svg {
    width: 20px;
    height: 12px;
    color: #eee;
}

.swatch {
    width: 14px;
    height: 14px;
    margin-left: 10px;
    border: 1px solid #fff;
    background: #66ff44;
    box-shadow: inset 0 0 0 2px #333;
}

.source .btn {
    padding: 0 8px;
}

.bar {
    width: 20px;
    text-align: center;
}

.source .mode {
    gap: 9px;
    width: 55px;
    padding: 0;
}

.source .mode.on {
    margin-left: 5px;
    background: #4166ff;
}

/* 三维视图 */
.view {
    flex: 1;
    display: flex;
    flex-direction: column;
    border: 1px solid #808080;
}

.viewport {
    position: relative;
    flex: 1;
    display: flex;
    flex-direction: column;
    padding: 4px 4px 9px;
}

.viewport > div {
    position: relative;
}

.scene {
    position: absolute;
    inset: 0;
    width: 100%;
    height: 100%;
}

.scene text {
    fill: #fff;
    font-size: 15px;
}

.scene .red {
    fill: #f00;
}

.scene .blue {
    fill: #2a00c0;
}

.scene .pink {
    fill: #d8a8a8;
}

.scene .dim {
    fill: #907080;
}

.view-tools {
    display: flex;
    align-items: center;
}

.material {
    width: 40px;
    margin-right: 10px;
}

.tex {
    display: flex;
    align-items: center;
    justify-content: center;
    width: 21px;
    height: 21px;
    margin-right: 6px;
    border: 1px solid transparent;
}

.tex.on {
    border-color: #0000c8;
    background: #444;
}

.tex svg {
    width: 17px;
    height: 17px;
}

.view-tools .bar {
    width: 9px;
}

.zoom-tools {
    display: flex;
    gap: 5px;
    margin-left: auto;
}

.sq {
    width: 30px;
}

.scale {
    flex: 1;
    display: flex;
    padding: 16px 0 21px 5px;
}

.ticks {
    display: flex;
    flex-direction: column;
    justify-content: space-between;
    width: 84px;
    margin: -10px 0;
}

.ticks li {
    display: flex;
    align-items: center;
    gap: 2px;
    height: 20px;
    font-size: 14px;
}

.ticks li::before {
    content: "";
    width: 10px;
    height: 1px;
    background: #888;
}

.ramp {
    display: grid;
    width: 20px;
    background: linear-gradient(#f00 16%, #b0b000 29%, #00c000 43%, #009878 56%, #00f 71%, #a000a0 84%) center / 10px 100% no-repeat;
}

.ramp input {
    grid-area: 1 / 1;
    width: 20px;
    height: 100%;
    writing-mode: vertical-lr;
    direction: rtl;
    appearance: none;
    pointer-events: none;
}

.ramp input::-webkit-slider-thumb {
    appearance: none;
    width: 20px;
    height: 20px;
    border: 1px solid #ccc;
    border-radius: 3px;
    background: linear-gradient(#555, #555) center / 10px 1px no-repeat, rgba(248, 248, 248, 0.93);
    pointer-events: auto;
}

.limits {
    display: grid;
    grid-template-columns: 44px 96px;
    gap: 5px 0;
    align-items: center;
    padding-left: 5px;
    font-size: 13px;
}

.spin, .digits {
    height: 30px;
    border: 2px solid #808080;
    background: #000;
    font-size: 15px;
}

.spin {
    display: flex;
    align-items: center;
}

.spin input {
    flex: 1;
    min-width: 0;
    padding-bottom: 4px;
    text-align: center;
}

.spin button {
    width: 24px;
    height: 26px;
    padding: 6px 8px;
}

.spin svg {
    display: block;
    width: 8px;
    height: 12px;
}

.digits {
    border-color: #606060;
}

.digits select {
    padding-left: 10px;
}

.view-bar {
    display: grid;
    grid-template-columns: 1fr auto 1fr;
    align-items: center;
    height: 50px;
    padding: 0 19px 0 10px;
    background: #808080;
}

.segment {
    display: flex;
}

.segment button {
    width: 80px;
    height: 30px;
    background: #999;
}

.segment .on {
    background: #4166ff;
}

.size {
    display: flex;
    align-items: center;
    gap: 10px;
    margin-right: 22px;
}

.size svg {
    width: 18px;
    height: 18px;
}

.size input {
    width: 188px;
    height: 24px;
    background: linear-gradient(#b4b4b4, #b4b4b4) center / 100% 2px no-repeat;
    appearance: none;
}

.size input::-webkit-slider-thumb {
    appearance: none;
    width: 8px;
    height: 24px;
    border-radius: 3px;
    background: #4166ff;
}

.toggles {
    display: flex;
    align-items: center;
    justify-content: flex-end;
    color: #000;
    font-size: 13px;
}

.toggles input {
    display: flex;
    align-items: center;
    width: 44px;
    height: 21px;
    margin: 0 9px;
    padding-left: 4px;
    border: 2px solid #d8d8d8;
    border-radius: 11px;
    appearance: none;
}

.toggles input:last-child {
    margin-right: 0;
}

.toggles input::before {
    content: "";
    width: 10px;
    height: 10px;
    border-radius: 50%;
    background: #eee;
}

.toggles input:disabled {
    border-color: #949494;
}

.toggles input:disabled::before {
    background: #999;
}

/* 输出 */
.tabs {
    display: flex;
    align-items: center;
    gap: 34px;
    margin: 12px 0 15px;
    padding-left: 18px;
}

.tabs button {
    color: #333;
    font-size: 23px;
    line-height: 34px;
}

.tabs .on {
    margin-left: -4px;
    color: #fff;
    font-size: 24px;
}

.tabs .save-table {
    width: 60px;
    height: 32px;
    margin-left: auto;
    color: #fff;
    font-size: 13px;
}

.output {
    height: 216px;
    padding: 11px 25px 11px 12px;
    border: 1px solid #808080;
}

table {
    width: 100%;
    table-layout: fixed;
    border-collapse: collapse;
    background: #666;
    font-size: 13px;
}

th, td {
    padding: 0;
    overflow: hidden;
    border: 1px solid #8a8a8a;
    font-weight: 400;
    text-align: left;
    white-space: nowrap;
}

th {
    height: 31px;
    font-size: 11px;
    text-align: center;
}

td {
    height: 28px;
}

.c-name {
    width: 30%;
}

.c-type {
    width: 20%;
}

.c-value {
    width: 40%;
}

.name {
    padding-left: 20px;
}

.name.open {
    padding-left: 0;
}

.name.open::before {
    content: "";
    display: inline-block;
    margin-right: 13px;
    border: 4px solid transparent;
    border-right: none;
    border-left: 7px solid #fff;
}

.ok {
    font-family: "DejaVu Sans", sans-serif;
    font-size: 11px;
    vertical-align: top;
}

/* 模块树 */
.column {
    display: flex;
    flex-direction: column;
    min-height: 0;
}

.column h2 {
    margin-bottom: 12px;
    padding-left: 12px;
    font-size: 15px;
    line-height: 22px;
}

.column:last-child h2 {
    padding-left: 0;
}

.modules {
    flex: 1;
    min-height: 0;
    padding: 10px 11px 11px;
    border: 1px solid #808080;
}

.tree {
    display: flex;
    flex-direction: column;
    gap: 6px;
    height: 100%;
    overflow: hidden;
}

.tree li {
    display: flex;
    flex-shrink: 0;
    align-items: center;
    gap: 13px;
    height: 48px;
    margin-left: 32px;
    padding-left: 13px;
    white-space: nowrap;
}

/* 列表已向下滚动 */
.tree li:first-child {
    margin-top: -20px;
}

.tree svg {
    flex-shrink: 0;
    width: 22px;
    height: 22px;
}

.tree .on {
    overflow: hidden;
    background: #263c9a;
}

.tree .group {
    gap: 0;
    margin-left: 0;
    padding-left: 2px;
}

.tree .group svg {
    width: 24px;
    height: 20px;
    margin: 0 12px 0 22px;
}

.tree i {
    width: 9px;
    border: 0 solid transparent;
}

.tree .closed {
    border-width: 4px 0 4px 9px;
    border-left-color: #fff;
}

.tree .opened {
    width: 10px;
    margin-right: -1px;
    border-width: 8px 5px 0;
    border-top-color: #fff;
}

/* 流程 */
.flow {
    position: relative;
    flex: 1;
    display: flex;
    flex-direction: column;
    justify-content: space-between;
    padding: 58px 11px 11px;
    border: 1px solid #808080;
}

.nodes {
    width: 375px;
    margin-left: 17px;
}

.nodes li {
    display: grid;
    grid-template-columns: 24px 1fr 16px;
    align-items: center;
    height: 64px;
    padding: 0 26px 0 20px;
    font-size: 29px;
    line-height: 36px;
    text-align: center;
}

/* 节点之间的连线 */
.nodes li + li {
    position: relative;
    margin-top: 32px;
}

.nodes li + li::before {
    content: "";
    position: absolute;
    bottom: 100%;
    left: 50%;
    width: 3px;
    height: 32px;
    margin-left: -2px;
    background: #a0a0a0;
}

.nodes .edge {
    background: #825a2c;
}

.nodes .data {
    background: #696969;
}

.nodes .active {
    background: #4166ff;
}

.nodes .kind {
    width: 20px;
    height: 18px;
    margin-left: 4px;
}

.nodes .tick {
    width: 16px;
    height: 14px;
}

.log {
    height: 35px;
    padding: 3px 10px;
    border: 2px solid #808080;
    font-size: 13px;
    line-height: 20px;
}

/* 设置窗口 */
.dialog {
    position: absolute;
    top: 44px;
    right: -3px;
    width: 450px;
    padding-bottom: 10px;
    background: #2b2b2b;
    font-size: 13px;
}

.dlg-head {
    display: flex;
    align-items: center;
    height: 35px;
    padding: 0 3px 0 31px;
    background: #4166ff;
}

.dlg-head h3 {
    flex: 1;
    font-size: 27px;
    line-height: 35px;
    text-align: center;
}

.close {
    width: 30px;
    height: 30px;
    background: #c00000;
}

.close svg {
    width: 12px;
    height: 12px;
}

.dialog h4 {
    padding: 11px 22px 13px;
    line-height: 18px;
}

.settings {
    min-height: 585px;
    margin: 0 10px;
    padding: 4px;
    border: 1px solid #808080;
}

.row {
    display: flex;
    gap: 5px;
    height: 25px;
    margin-bottom: 5px;
}

.row label {
    flex-shrink: 0;
    width: 130px;
    line-height: 17px;
}

.row.middle label {
    line-height: 25px;
}

.dialog input {
    flex: 1;
    min-width: 0;
    height: 25px;
    padding: 0 10px 4px;
    border: 2px solid #808080;
    background: #000;
}

.row button {
    flex: 1;
    background: #555;
}

.row .link {
    flex: none;
    width: 30px;
}

.link:disabled {
    color: #808080;
}

.link svg {
    width: 14px;
    height: 8px;
}

.row .select {
    flex: 1;
    border: 2px solid #808080;
    background: #1c1c1c;
}

.row select {
    padding-left: 10px;
}

.regions {
    height: 225px;
    padding: 4px;
    border: 1px solid #808080;
}

.region {
    display: grid;
    grid-template-columns: 35px 85px repeat(3, 105px);
    gap: 5px;
    padding: 13px 0 2px;
    overflow: hidden;
    background: #3d8ae8;
    line-height: 17px;
    white-space: nowrap;
}

.region .no {
    grid-row: 1 / 4;
    align-self: center;
    padding-bottom: 8px;
}

.actions, .desc-head {
    display: flex;
    justify-content: flex-end;
    gap: 10px;
    padding: 5px 20px 12px 0;
}

.desc-head {
    justify-content: space-between;
    padding: 0 20px 4px 0;
}

.actions button, .desc-head button {
    display: flex;
    align-items: center;
    justify-content: center;
    gap: 12px;
    width: 72px;
    height: 22px;
    background: #555;
    font-size: 10px;
}

.desc-head button {
    width: 80px;
}

.actions svg, .desc-head svg {
    width: 13px;
    height: 13px;
}

.dialog .desc-head h4 {
    padding: 0 22px;
    line-height: 13px;
}

.desc {
    height: 238px;
    margin: 0 10px;
    padding: 11px;
    border: 1px solid #808080;
}

.desc textarea {
    display: block;
    width: 100%;
    height: 100%;
    padding: 2px 10px;
    border: 2px solid #808080;
    background: #000;
    resize: none;
}

.status {
    height: 22px;
    padding-right: 20px;
    background: #1f1f1f;
    line-height: 22px;
    text-align: right;
}
```
FILE: scene.js
```js
const NS = 'http://www.w3.org/2000/svg';

function add(parent, tag, attrs) {
    const el = document.createElementNS(NS, tag);
    for (const key in attrs) el.setAttribute(key, attrs[key]);
    parent.appendChild(el);
}

// 地面网格的四条边
const leftY = x => 858 - 0.591 * (x - 20);
const nearY = x => 904 - 0.3119 * (x - 20);
const redY = x => 751 - 0.2565 * (x - 201);
const greenY = x => 573 - 0.2226 * (x - 895);

const floor = document.getElementById('floor');
let gray = '';
let white = '';

// 沿 X 方向
for (let k = 0; k < 19; k++) {
    const f = 1.236 * k / (k + 4.42);
    const x1 = -145 + 346 * f;
    const x2 = 1640 - 745 * f;
    const y2 = k === 0 ? nearY(x2) : greenY(x2);
    const d = `M${x1} ${leftY(x1)}L${x2} ${y2}`;
    if (k % 5 === 0) white += d; else gray += d;
}
white += 'M-145 955L201 751';

// 沿 Y 方向
const near = [185, 421, 599, 742, 853, 948, 1021, 1088, 1141, 1198, 1240, 1275, 1305, 1332, 1356, 1378];
near.forEach((x, i) => {
    const x1 = i === 0 ? 242 : 305 + 46 * (i - 1);
    const d = `M${x1} ${redY(x1)}L${x} ${nearY(x)}`;
    if (i % 5 === 4) white += d; else gray += d;
});
add(floor, 'path', { d: gray, stroke: '#808080', fill: 'none' });
add(floor, 'path', { d: white, stroke: '#e6e6e6', fill: 'none' });

// 点云
const cloud = document.getElementById('cloud');
let seed = 7;
function rnd() {
    seed = (seed * 16807) % 2147483647;
    return seed / 2147483647;
}

function scatter(color, count, xa, ya, xb, yb, spread, size) {
    let d = '';
    for (let i = 0; i < count; i++) {
        const t = rnd();
        const x = Math.round(xa + (xb - xa) * t);
        const y = Math.round(ya + (yb - ya) * t + (rnd() + rnd() - 1) * spread);
        d += `M${x} ${y}h${size}`;
    }
    add(cloud, 'path', { d: d, stroke: color, 'stroke-width': 2 });
}

scatter('#2f8f70', 220, 500, 634, 640, 600, 6, 3);
scatter('#20409a', 700, 630, 596, 1050, 508, 6, 4);
scatter('#2a6fc0', 450, 485, 644, 760, 584, 5, 3);
scatter('#8a3080', 650, 620, 622, 1025, 523, 4, 4);
scatter('#6a2a7a', 60, 510, 646, 760, 598, 11, 2);

// 橙色条带，左端最窄
for (let i = 0; i < 8; i++) {
    scatter(i < 4 ? '#a06848' : '#96702a', 90, 502 + i * 17, 619 - i * 6, 519 + i * 17, 613 - i * 6, 2 + (i < 5 ? i : 8 - i) * 2, 4);
}
add(cloud, 'path', { d: 'M625 580L726 562', stroke: '#8a5a20', 'stroke-width': 4 });
add(cloud, 'path', { d: 'M560 604L618 592', stroke: '#7a4018', 'stroke-width': 2 });

// 上方断续的小块
for (let i = 0; i < 10; i++) {
    const x = 632 + i * 31;
    const y = 592 - i * 7;
    scatter('#2f8f70', 90 - i * 6, x, y, x + 18, y - 4, 9 - i * 0.7, 2);
}
add(cloud, 'path', { d: 'M916 530L1111 488', stroke: '#267a60', 'stroke-width': 2, 'stroke-dasharray': '30 10' });
add(cloud, 'path', { d: 'M832 535l24-5M1012 498l16-4', stroke: '#8a5a20', 'stroke-width': 2 });
```
